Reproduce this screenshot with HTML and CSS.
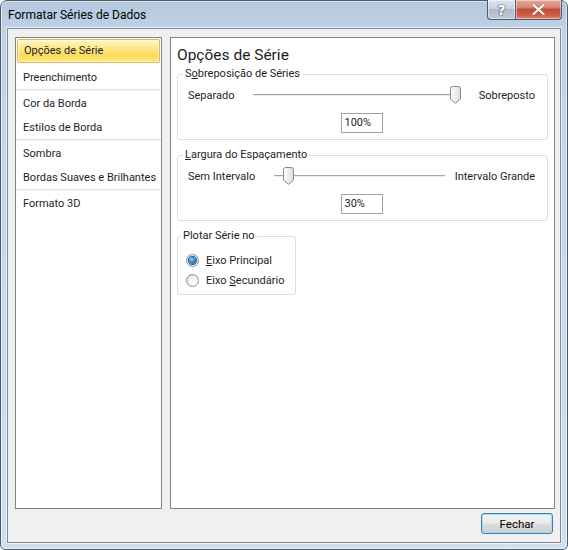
FILE: index.html
```html
<!DOCTYPE html>
<html lang="pt">
<head>
<meta charset="utf-8">
<title>Formatar Séries de Dados</title>
<link rel="stylesheet" href="styles.css">
</head>
<body>
<div class="window">
  <div class="titlebar">
    <div class="title">Formatar Séries de Dados</div>
    <div class="caption-buttons">
      <div class="cap-btn help"><span>?</span></div>
      <div class="cap-btn close">
        <svg width="13" height="11" viewBox="0 0 13 11"><path d="M1.5 1 L11.5 10 M11.5 1 L1.5 10" stroke="#3a3a3a" stroke-width="3.4" stroke-linecap="round" opacity="0.35"/><path d="M1.5 1 L11.5 10 M11.5 1 L1.5 10" stroke="#ffffff" stroke-width="2.2" stroke-linecap="round"/></svg>
      </div>
    </div>
  </div>
  <div class="client">
    <div class="main">
      <ul class="nav">
        <li class="nav-item selected">Opções de Série</li>
        <li class="nav-item tall">Preenchimento</li>
        <li class="nav-sep"></li>
        <li class="nav-item">Cor da Borda</li>
        <li class="nav-item">Estilos de Borda</li>
        <li class="nav-sep"></li>
        <li class="nav-item">Sombra</li>
        <li class="nav-item">Bordas Suaves e Brilhantes</li>
        <li class="nav-sep"></li>
        <li class="nav-item">Formato 3D</li>
      </ul>
      <div class="panel">
        <h1 class="heading">Opções de Série</h1>
        <fieldset class="group">
          <legend>S<u>o</u>breposição de Séries</legend>
          <div class="slider-row">
            <span class="slider-label">Separado</span>
            <div class="slider s1">
              <div class="track"></div>
              <svg class="thumb" style="left: calc(100% - 11px)" width="11" height="18" viewBox="0 0 11 18"><defs><linearGradient id="tg1" x1="0" y1="0" x2="1" y2="0"><stop offset="0" stop-color="#ffffff"/><stop offset="1" stop-color="#dcdcdc"/></linearGradient></defs><path d="M0.5 2.5 Q0.5 0.5 2.5 0.5 H8.5 Q10.5 0.5 10.5 2.5 V13 L5.5 17.3 L0.5 13 Z" fill="url(#tg1)" stroke="#8a8a8a"/></svg>
            </div>
            <span class="slider-label">Sobreposto</span>
          </div>
          <div class="value-box">100%</div>
        </fieldset>
        <fieldset class="group">
          <legend><u>L</u>argura do Espaçamento</legend>
          <div class="slider-row">
            <span class="slider-label">Sem Intervalo</span>
            <div class="slider s2">
              <div class="track"></div>
              <svg class="thumb" style="left: calc(6% - 1px)" width="11" height="18" viewBox="0 0 11 18"><defs><linearGradient id="tg2" x1="0" y1="0" x2="1" y2="0"><stop offset="0" stop-color="#ffffff"/><stop offset="1" stop-color="#dcdcdc"/></linearGradient></defs><path d="M0.5 2.5 Q0.5 0.5 2.5 0.5 H8.5 Q10.5 0.5 10.5 2.5 V13 L5.5 17.3 L0.5 13 Z" fill="url(#tg2)" stroke="#8a8a8a"/></svg>
            </div>
            <span class="slider-label">Intervalo Grande</span>
          </div>
          <div class="value-box">30%</div>
        </fieldset>
        <fieldset class="group small">
          <legend>Plotar Série no</legend>
          <label class="radio-row"><span class="radio checked"></span><span><u>E</u>ixo Principal</span></label>
          <label class="radio-row"><span class="radio"></span><span>Eixo <u>S</u>ecundário</span></label>
        </fieldset>
      </div>
    </div>
    <div class="footer">
      <div class="button">Fechar</div>
    </div>
  </div>
</div>
</body>
</html>
```
FILE: styles.css
```css
* { box-sizing: border-box; }
html, body {
  margin: 0;
  padding: 0;
  width: 568px;
  height: 550px;
  background: #ffffff;
  overflow: hidden;
}
body {
  font-family: Roboto, "Liberation Sans", sans-serif;
  font-size: 11px;
  color: #1e1e1e;
}
.window {
  width: 568px;
  height: 550px;
  border: 1px solid #4e5d6e;
  border-radius: 7px 7px 5px 5px;
  background: linear-gradient(180deg, #b3c7dd 0%, #c0d3e7 6%, #c7d9ec 50%, #cfe0f1 100%);
  box-shadow: inset 0 0 0 1px rgba(255,255,255,0.55);
  display: flex;
  flex-direction: column;
}
.titlebar {
  height: 27px;
  display: flex;
  align-items: flex-start;
  flex: none;
}
.title {
  padding: 6px 0 0 7px;
  line-height: 16px;
  color: #000;
  font-size: 12px;
}
.caption-buttons {
  margin-left: auto;
  margin-right: 5px;
  margin-top: -1px;
  display: flex;
}
.cap-btn {
  height: 20px;
  border: 1px solid #4f5c6a;
  border-top: none;
  display: flex;
  align-items: center;
  justify-content: center;
  box-shadow: inset 0 0 0 1px rgba(255,255,255,0.45);
}
.help {
  width: 28px;
  border-right: none;
  border-radius: 0 0 0 4px;
  background: linear-gradient(180deg, #dde6f0 0%, #c7d3e0 45%, #aebdcc 50%, #bccad8 100%);
}
.help span {
  font-family: "DejaVu Sans", sans-serif;
  font-weight: bold;
  font-size: 14px;
  color: #fff;
  text-shadow: 0 0 2px #34404c, 0 0 1px #34404c;
  line-height: 1;
}
.close {
  width: 47px;
  border-radius: 0 0 4px 0;
  background: linear-gradient(180deg, #e7a798 0%, #d68473 40%, #c44a38 50%, #cf5d4a 80%, #de8c7a 100%);
}
.client {
  flex: 1;
  margin: 0 6px 6px 6px;
  border: 1px solid #7a8a9c;
  box-shadow: 0 0 0 1px rgba(255,255,255,0.6);
  background: #f0f0f0;
  padding: 8px 5px 8px 7px;
  display: flex;
  flex-direction: column;
}
.main {
  height: 472px;
  display: flex;
  gap: 8px;
}
.nav {
  list-style: none;
  margin: 0;
  padding: 0;
  width: 147px;
  border: 1px solid #858585;
  background: #ffffff;
}
.nav-item {
  height: 24px;
  line-height: 25px;
  padding-left: 7px;
  white-space: nowrap;
}
.nav-item.tall { height: 26px; line-height: 29px; }
.nav-item.selected {
  margin: 1px 1px 0 1px;
  padding-left: 6px;
  height: 24px;
  line-height: 22px;
  border: 1px solid #dcb75d;
  border-radius: 2px;
  background: linear-gradient(180deg, #fff6c9 0%, #ffe98c 35%, #fedb5c 70%, #fee47c 100%);
  box-shadow: inset 0 0 0 1px rgba(255,255,255,0.5);
}
.nav-sep {
  height: 2px;
  border-top: 1px solid #e3e4e6;
  border-bottom: 1px solid #f5f5f6;
}
.panel {
  flex: 1;
  border: 1px solid #858585;
  background: #ffffff;
  display: flex;
  flex-direction: column;
  align-items: stretch;
}
.heading {
  margin: 7px 0 2px 6px;
  font-size: 15.5px;
  font-weight: normal;
  line-height: 20px;
  color: #1e1e1e;
}
.group {
  margin: 0 6px 8px 6px;
  padding: 0 12px 6px 10px;
  border: 1px solid #d5dfe5;
  border-radius: 3px;
  min-width: 0;
}
.group legend {
  margin-left: -5px;
  padding: 0 2px;
  line-height: 14px;
}
.slider-row {
  margin-top: 5px;
  height: 18px;
  display: flex;
  align-items: center;
}
.slider {
  flex: 1;
  position: relative;
  height: 18px;
}
.s1 { margin: 0 18px 0 18px; }
.s2 { margin: 0 10px 0 19px; }
.track {
  position: absolute;
  left: 0;
  right: 0;
  top: 8px;
  height: 2px;
  border-top: 1px solid #a6a6a6;
  border-bottom: 1px solid #ececec;
}
.thumb {
  position: absolute;
  top: 0;
  display: block;
}
.value-box {
  margin: 9px auto 0 auto;
  width: 42px;
  height: 20px;
  border: 1px solid #a3a3a3;
  padding-left: 3px;
  line-height: 18px;
}
.group.small {
  align-self: flex-start;
  padding: 0 11px 4px 8px;
}
.radio-row {
  height: 20px;
  display: flex;
  align-items: center;
  gap: 7px;
}
.radio-row:first-of-type { margin-top: 7px; }
.radio {
  width: 13px;
  height: 13px;
  border-radius: 50%;
  border: 1px solid #8e8f8f;
  background: radial-gradient(circle at 60% 65%, #ffffff 0%, #f4f4f4 40%, #d2d2d2 100%);
  display: flex;
  align-items: center;
  justify-content: center;
}
.radio.checked::after {
  content: "";
  width: 7px;
  height: 7px;
  border-radius: 50%;
  background: radial-gradient(circle at 40% 35%, #9fd0f5 0%, #3c8ad0 45%, #0f4f8f 100%);
  box-shadow: 0 0 0 1px #1b4f84;
}
.footer {
  margin-top: 4px;
  display: flex;
  justify-content: flex-end;
  padding-right: 2px;
}
.button {
  width: 72px;
  height: 21px;
  border: 1px solid #3c7fb1;
  border-radius: 3px;
  background: linear-gradient(180deg, #f2f2f2 0%, #ebebeb 48%, #dddddd 52%, #cfcfcf 100%);
  box-shadow: inset 0 0 0 1px #a8dcf5;
  display: flex;
  align-items: center;
  justify-content: center;
  color: #000;
  font-size: 11.5px;
}
```
